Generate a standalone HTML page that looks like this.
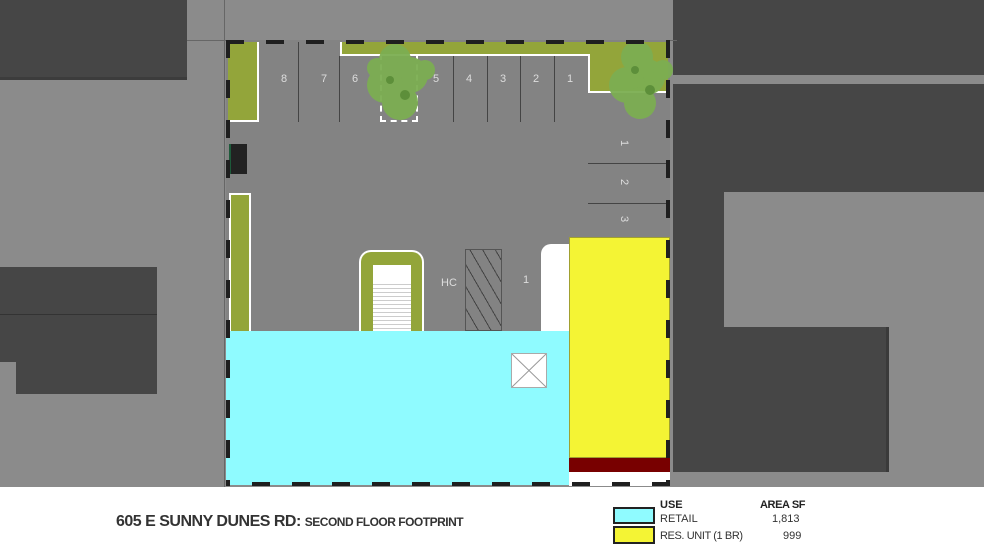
<!DOCTYPE html>
<html><head><meta charset="utf-8"><style>
*{margin:0;padding:0;box-sizing:border-box}
body{width:984px;height:553px;overflow:hidden;background:#fff;position:relative;font-family:"Liberation Sans",sans-serif}
.a{position:absolute}
.d{background:#464646}
.g{background:#93a53a}
.t{font-family:"Liberation Sans",sans-serif;font-size:11px;color:#ddd;position:absolute}
</style></head><body>
<div class="a" style="left:0;top:0;width:984px;height:487px;background:#8b8b8b"></div>
<div class="a d" style="left:0;top:0;width:187px;height:80px;border-bottom:3px solid #3c3c3c"></div>
<div class="a d" style="left:673px;top:0;width:311px;height:75px"></div>
<div class="a d" style="left:673px;top:84px;width:311px;height:108px"></div>
<div class="a d" style="left:673px;top:192px;width:51px;height:280px"></div>
<div class="a d" style="left:724px;top:327px;width:165px;height:145px;border-right:3px solid #3a3a3a"></div>
<div class="a d" style="left:0;top:267px;width:157px;height:48px;border-bottom:1px solid #333"></div>
<div class="a d" style="left:0;top:315px;width:157px;height:47px"></div>
<div class="a d" style="left:16px;top:362px;width:141px;height:32px"></div>
<div class="a" style="left:224px;top:0;width:1px;height:487px;background:#666"></div>
<div class="a" style="left:187px;top:40px;width:490px;height:1px;background:#666"></div>
<div class="a" style="left:226px;top:40px;width:444px;height:445px;background:#838383"></div>
<div class="a g" style="left:228px;top:42px;width:31px;height:80px;border-right:2px solid #fff;border-bottom:2px solid #fff"></div>
<div class="a g" style="left:340px;top:42px;width:328px;height:14px;border-left:2px solid #fff;border-bottom:2px solid #fff"></div>
<div class="a g" style="left:588px;top:54px;width:80px;height:39px;border-left:2px solid #fff;border-bottom:2px solid #fff"></div>
<div class="a" style="left:380px;top:54px;width:38px;height:68px;border:2px dashed #fff;border-top:none"></div>
<div class="a g" style="left:229px;top:193px;width:22px;height:138px;border:2px solid #fff;border-bottom:none"></div>
<div class="a" style="left:298px;top:42px;width:1px;height:80px;background:#444"></div>
<div class="a" style="left:339px;top:56px;width:1px;height:66px;background:#444"></div>
<div class="a" style="left:453px;top:56px;width:1px;height:66px;background:#444"></div>
<div class="a" style="left:487px;top:56px;width:1px;height:66px;background:#444"></div>
<div class="a" style="left:520px;top:56px;width:1px;height:66px;background:#444"></div>
<div class="a" style="left:554px;top:56px;width:1px;height:66px;background:#444"></div>
<div class="a" style="left:588px;top:163px;width:80px;height:1px;background:#444"></div>
<div class="a" style="left:588px;top:203px;width:80px;height:1px;background:#444"></div>
<span class="t" style="left:281px;top:73px">8</span>
<span class="t" style="left:321px;top:73px">7</span>
<span class="t" style="left:352px;top:73px">6</span>
<span class="t" style="left:433px;top:73px">5</span>
<span class="t" style="left:466px;top:73px">4</span>
<span class="t" style="left:500px;top:73px">3</span>
<span class="t" style="left:533px;top:73px">2</span>
<span class="t" style="left:567px;top:73px">1</span>
<span class="t" style="left:621px;top:137px;transform:rotate(90deg)">1</span>
<span class="t" style="left:621px;top:176px;transform:rotate(90deg)">2</span>
<span class="t" style="left:621px;top:213px;transform:rotate(90deg)">3</span>
<span class="t" style="left:441px;top:277px">HC</span>
<span class="t" style="left:523px;top:274px">1</span>
<svg class="a" style="left:355px;top:40px" width="95" height="95"><g fill="#7cae52" opacity=".95"><circle cx="40" cy="20" r="16"/><circle cx="55" cy="35" r="18"/><circle cx="30" cy="45" r="18"/><circle cx="45" cy="62" r="18"/><circle cx="22" cy="28" r="10"/><circle cx="70" cy="30" r="10"/></g><g fill="#5d8f3a"><circle cx="35" cy="40" r="4"/><circle cx="50" cy="55" r="5"/></g></svg>
<svg class="a" style="left:595px;top:35px" width="85" height="95"><g fill="#7cae52" opacity=".95"><circle cx="42" cy="22" r="16"/><circle cx="52" cy="42" r="18"/><circle cx="32" cy="50" r="18"/><circle cx="45" cy="68" r="16"/><circle cx="68" cy="35" r="10"/></g><g fill="#5d8f3a"><circle cx="40" cy="35" r="4"/><circle cx="55" cy="55" r="5"/></g></svg>
<div class="a" style="left:229px;top:144px;width:18px;height:30px;background:#222;border-left:2px solid #1d5a3a"></div>
<div class="a g" style="left:359px;top:250px;width:65px;height:81px;border:2px solid #fff;border-bottom:none;border-radius:12px 12px 0 0"></div>
<div class="a" style="left:373px;top:265px;width:38px;height:66px;background:linear-gradient(#fff 0 16px,transparent 16px),repeating-linear-gradient(#fff 0 3px,#ccc 3px 4px)"></div>
<div class="a" style="left:465px;top:249px;width:37px;height:82px;border:1px solid #555;background:repeating-linear-gradient(60deg,#838383 0 10px,#444 10px 11px)"></div>
<div class="a" style="left:541px;top:244px;width:30px;height:87px;background:#fff;border-radius:10px 0 0 0"></div>
<div class="a" style="left:226px;top:331px;width:343px;height:154px;background:#8ffbff"></div>
<div class="a" style="left:511px;top:353px;width:36px;height:35px;background:#fff;border:1px solid #aaa"><svg width="34" height="33"><path d="M0 0L34 33M34 0L0 33" stroke="#999" stroke-width="1"/></svg></div>
<div class="a" style="left:569px;top:237px;width:101px;height:221px;background:#f4f434;border:1px solid #a0a030"></div>
<div class="a" style="left:569px;top:458px;width:101px;height:14px;background:#780000"></div>
<div class="a" style="left:569px;top:472px;width:101px;height:14px;background:#fff"></div>
<svg class="a" style="left:0;top:0" width="984" height="553"><g stroke="#1f1f1f" stroke-width="4" stroke-dasharray="18 22" fill="none"><path d="M226 42H670"/><path d="M228 40V486"/><path d="M668 40V486"/><path d="M670 484H226"/></g></svg>
<div class="a" style="left:116px;top:513px;font-size:16px;font-weight:bold;color:#333;letter-spacing:-.5px">605 E SUNNY DUNES RD: <span style="font-size:12px">SECOND FLOOR FOOTPRINT</span></div>
<div class="a" style="left:660px;top:499px;font-size:11px;font-weight:bold;color:#222">USE</div>
<div class="a" style="left:760px;top:499px;font-size:11px;font-weight:bold;color:#222;letter-spacing:-.4px">AREA SF</div>
<div class="a" style="left:613px;top:507px;width:42px;height:17px;background:#8ffbff;border:2px solid #222"></div>
<div class="a" style="left:613px;top:526px;width:42px;height:18px;background:#f4f434;border:2px solid #222"></div>
<div class="a" style="left:660px;top:513px;font-size:11px;color:#333">RETAIL</div>
<div class="a" style="left:660px;top:530px;font-size:11px;color:#333;letter-spacing:-.4px">RES. UNIT (1 BR)</div>
<div class="a" style="left:772px;top:513px;font-size:11px;color:#333">1,813</div>
<div class="a" style="left:783px;top:530px;font-size:11px;color:#333">999</div>
</body></html>
